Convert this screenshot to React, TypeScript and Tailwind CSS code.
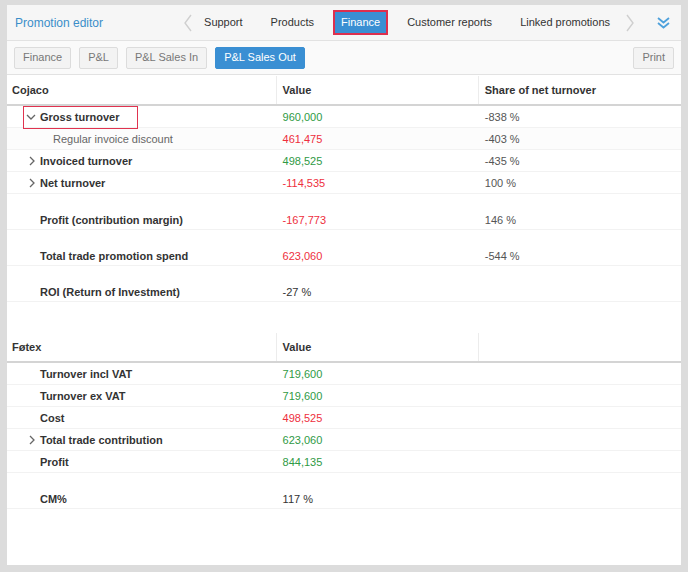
const font = { fontFamily: '"Liberation Sans", Arial, sans-serif' };

type Row = {
  label: string;
  value: string;
  share?: string;
  tone?: "green" | "red" | "dark";
  kind?: "open" | "closed" | "child" | "plain";
  tall?: boolean;
  marked?: boolean;
};

const cojaco: Row[] = [
  { label: "Gross turnover", value: "960,000", share: "-838 %", tone: "green", kind: "open", marked: true },
  { label: "Regular invoice discount", value: "461,475", share: "-403 %", tone: "red", kind: "child" },
  { label: "Invoiced turnover", value: "498,525", share: "-435 %", tone: "green", kind: "closed" },
  { label: "Net turnover", value: "-114,535", share: "100 %", tone: "red", kind: "closed" },
  { label: "Profit (contribution margin)", value: "-167,773", share: "146 %", tone: "red", tall: true },
  { label: "Total trade promotion spend", value: "623,060", share: "-544 %", tone: "red", tall: true },
  { label: "ROI (Return of Investment)", value: "-27 %", tone: "dark", tall: true },
];

const fotex: Row[] = [
  { label: "Turnover incl VAT", value: "719,600", tone: "green" },
  { label: "Turnover ex VAT", value: "719,600", tone: "green" },
  { label: "Cost", value: "498,525", tone: "red" },
  { label: "Total trade contribution", value: "623,060", tone: "green", kind: "closed" },
  { label: "Profit", value: "844,135", tone: "green" },
  { label: "CM%", value: "117 %", tone: "dark", tall: true },
];

const toneClass = {
  green: "text-[#2f9a45]",
  red: "text-[#ee2f3d]",
  dark: "text-[#333]",
};

function ChevronRight() {
  return (
    <svg width="8" height="10" viewBox="0 0 8 10" className="ml-[5px]">
      <polyline points="2,1 6,5 2,9" fill="none" stroke="#666" strokeWidth="1.3" />
    </svg>
  );
}

function ChevronDown() {
  return (
    <svg width="10" height="8" viewBox="0 0 10 8" className="ml-[3px]">
      <polyline points="1,2 5,6 9,2" fill="none" stroke="#666" strokeWidth="1.3" />
    </svg>
  );
}

function DataRow({ row }: { row: Row }) {
  const kind = row.kind ?? "plain";
  return (
    <div
      className={`relative flex shrink-0 border-b border-[#f2f2f2] text-[11px] ${
        row.tall ? "h-[36px] items-end pb-[1px]" : "h-[22px] items-center pt-[1px]"
      } ${kind === "child" ? "bg-[#fcfcfc]" : ""}`}
    >
      <div className="flex w-[40%] items-center pl-[16px]">
        <span className="flex w-[17px] items-center">
          {kind === "open" && <ChevronDown />}
          {kind === "closed" && <ChevronRight />}
        </span>
        {kind === "child" ? (
          <span className="pl-[13px] text-[#666]">{row.label}</span>
        ) : (
          <span className="font-bold text-[#333]">{row.label}</span>
        )}
      </div>
      <div className={`w-[30%] pl-[6px] ${toneClass[row.tone ?? "dark"]}`}>{row.value}</div>
      <div className="w-[30%] pl-[6px] text-[#555]">{row.share}</div>
      {row.marked && (
        <div className="absolute left-[16px] top-0 z-10 h-[23px] w-[115px] border-[1.5px] border-[#e0334f]" />
      )}
    </div>
  );
}

function TableHead({ title, third }: { title: string; third?: string }) {
  return (
    <div className="flex h-[31px] shrink-0 border-b-2 border-[#d4d4d4] pt-[1px] text-[11px] font-bold text-[#333]">
      <div className="flex w-[40%] items-center border-r border-[#ececec] pl-[5px]">{title}</div>
      <div className="flex w-[30%] items-center border-r border-[#ececec] pl-[6px]">Value</div>
      <div className="flex w-[30%] items-center pl-[6px]">{third}</div>
    </div>
  );
}

function Tab({ label, active }: { label: string; active?: boolean }) {
  return active ? (
    <div className="flex h-[25px] items-center border-2 border-[#dd2f4e] bg-[#3a8fd3] px-[6px] text-white">
      {label}
    </div>
  ) : (
    <div className="flex h-[25px] items-center px-[8px] text-[#333]">{label}</div>
  );
}

function Btn({ label, active }: { label: string; active?: boolean }) {
  return (
    <div
      className={`flex h-[22px] items-center rounded-[2px] border px-[8px] text-[11px] ${
        active
          ? "border-[#3a8fd3] bg-[#3a8fd3] text-white"
          : "border-[#dcdcdc] bg-[#f3f3f3] text-[#777]"
      }`}
    >
      {label}
    </div>
  );
}

export default function App() {
  return (
    <div className="h-[572px] w-[688px] bg-[#dcdcdc] pl-[7px] pt-[5px]" style={font}>
      <div className="flex h-[560px] w-[674px] flex-col overflow-hidden bg-white">
        <div className="flex h-[36px] shrink-0 items-center border-b border-[#e2e2e2] bg-[#f6f6f6] pl-[8px] text-[11px]">
          <span className="text-[12px] text-[#3b8ec9]">Promotion editor</span>
          <svg width="10" height="18" viewBox="0 0 10 18" className="ml-[80px] mr-[3px]">
            <polyline points="8,1 2,9 8,17" fill="none" stroke="#cfcfcf" strokeWidth="1.4" />
          </svg>
          <Tab label="Support" />
          <div className="ml-[12px]">
            <Tab label="Products" />
          </div>
          <div className="ml-[11px]">
            <Tab label="Finance" active />
          </div>
          <div className="ml-[11px]">
            <Tab label="Customer reports" />
          </div>
          <div className="ml-[12px]">
            <Tab label="Linked promotions" />
          </div>
          <svg width="10" height="18" viewBox="0 0 10 18" className="ml-[7px]">
            <polyline points="2,1 8,9 2,17" fill="none" stroke="#cfcfcf" strokeWidth="1.4" />
          </svg>
          <svg width="13" height="12" viewBox="0 0 13 12" className="ml-[22px]">
            <polyline points="1,1 6.5,5.5 12,1" fill="none" stroke="#4ea1dc" strokeWidth="1.8" />
            <polyline points="1,6 6.5,10.5 12,6" fill="none" stroke="#4ea1dc" strokeWidth="1.8" />
          </svg>
        </div>

        <div className="flex h-[34px] shrink-0 items-center border-b border-[#e2e2e2] bg-[#fafafa] px-[7px]">
          <div className="flex gap-[8px]">
            <Btn label="Finance" />
            <Btn label="P&L" />
            <Btn label="P&L Sales In" />
            <Btn label="P&L Sales Out" active />
          </div>
          <div className="ml-auto">
            <Btn label="Print" />
          </div>
        </div>

        <TableHead title="Cojaco" third="Share of net turnover" />
        {cojaco.map((r) => (
          <DataRow key={r.label} row={r} />
        ))}

        <div className="h-[30px] shrink-0" />

        <TableHead title="Føtex" />
        {fotex.map((r) => (
          <DataRow key={r.label} row={r} />
        ))}
      </div>
    </div>
  );
}
